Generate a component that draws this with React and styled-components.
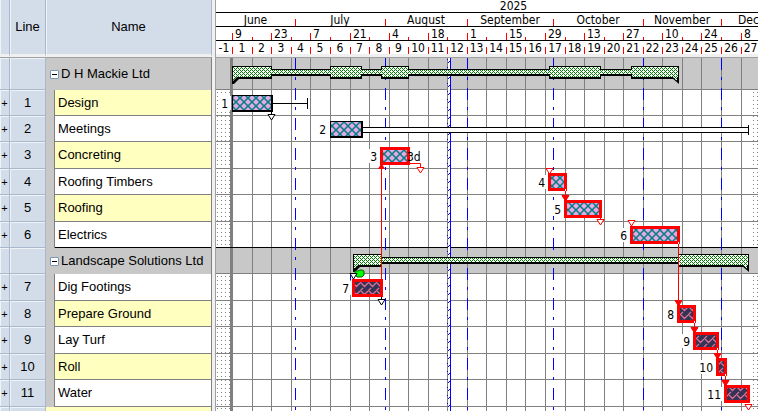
import styled, { createGlobalStyle } from "styled-components";

const GlobalStyle = createGlobalStyle`
  * {
    box-sizing: border-box;
  }

  body {
    margin: 0;
    background-color: #ffffff;
    color: #000000;
    font-family: "Liberation Sans", Arial, sans-serif;
    font-size: 13px;
  }
`;

const Planner = styled.main`
  display: flex;
  height: 100vh;
  overflow: hidden;
`;

const TaskTable = styled.table`
  flex: none;
  align-self: flex-start;
  width: 212px;
  table-layout: fixed;
  border-collapse: separate;
  border-spacing: 0;
`;

const HeadCell = styled.th`
  height: 57px;
  padding: 0 0 2px;
  background-color: #d3dde9;
  border-right: 1px solid #a9b8ca;
  border-bottom: 3px solid #f0f0f0;
  font-weight: normal;
  text-align: center;
  box-shadow: inset 1px 0 #eef3f8;
`;

const SideCell = styled.td`
  padding: 0;
  background-color: #d3dde9;
  border-right: 1px solid #a9b8ca;
  border-bottom: 1px solid #a9b8ca;
  box-shadow: inset 1px 1px #eef3f8;
  text-align: center;
  line-height: 16px;
`;

const Row = styled.tr`
  height: ${(props) => props.$height}px;

  &:first-child td {
    border-top: 1px solid #a0a0a0;
  }
`;

const NameCell = styled.td`
  padding: 0 0 1px 12px;
  background:
    linear-gradient(to right, #c8c8c8 8px, #808080 8px) no-repeat left top / 9px 100%,
    linear-gradient(
        ${(props) => (props.$last ? "#000000, #000000" : "#808080, #808080")}
      )
      no-repeat left bottom / 100% 1px,
    ${(props) => (props.$shaded ? "#ffffc0" : "#ffffff")};
  border-right: 1px solid #808080;
  line-height: 16px;
  white-space: nowrap;
`;

const GroupCell = styled.td`
  padding: 0 0 0 4px;
  background-color: #c8c8c8;
  border-right: 1px solid #808080;
  line-height: 16px;
  white-space: nowrap;
`;

const EmptyCell = styled.td`
  background-color: #ffffc0;
  border-right: 1px solid #808080;
`;

const GroupTitle = styled.div`
  display: flex;
  align-items: center;
  gap: 2px;
`;

const FoldButton = styled.button`
  display: flex;
  align-items: center;
  justify-content: center;
  width: 9px;
  height: 9px;
  padding: 0;
  background-color: #ffffff;
  border: 1px solid #7898b5;
  border-radius: 1px;

  &::before {
    content: "";
    width: 5px;
    height: 1px;
    background-color: #000000;
  }
`;

const ExpandButton = styled.button`
  display: block;
  width: 100%;
  padding: 0;
  background: none;
  border: none;
  color: #000000;
  font-family: "Liberation Sans", Arial, sans-serif;
  font-size: 11px;
  line-height: 16px;
`;

const Splitter = styled.div`
  flex: none;
  width: 4px;
  background-color: #f0f0f0;
  border-right: 1px solid #a0a0a0;
`;

const ChartPanel = styled.section`
  flex: 1;
  min-width: 0;
  overflow: hidden;
  font-family: "DejaVu Sans Condensed", Tahoma, sans-serif;
  font-size: 12px;
`;

const Timescale = styled.header`
  border-bottom: 3px solid #f0f0f0;
`;

const ScaleRow = styled.div`
  display: flex;
  height: ${(props) => props.$height}px;
  border-bottom: ${(props) => (props.$open ? "none" : "1px solid #000000")};
  line-height: ${(props) => (props.$year ? "13px" : "15px")};
`;

const ScaleCell = styled.div`
  flex: none;
  padding-left: ${(props) => (props.$align === "left" ? "3px" : "0")};
  text-align: ${(props) => props.$align || "center"};
  white-space: nowrap;
  background: linear-gradient(#ff0000, #ff0000) no-repeat left bottom / 1px
    ${(props) => props.$tick || 0}px;
`;

const Chart = styled.svg`
  display: block;
  width: 100%;
  border-top: 1px solid #a0a0a0;
`;

// The calendar runs on five-day weeks, day 0 is Monday 9 June 2025.
const dayX = (day) => Math.floor(16.71 + day * 3.91);
const weekX = (week) => dayX(week * 5);

const YEAR_END = 148;
const WEEKS = Array.from({ length: 30 }, (_, i) => i);

const MONTHS = [
  { name: "June", end: 16 },
  { name: "July", end: 39 },
  { name: "August", end: 60 },
  { name: "September", end: 82 },
  { name: "October", end: 105 },
  { name: "November", end: 125 },
  { name: "December", end: YEAR_END },
];

const ROWS = [
  {
    group: "D H Mackie Ltd",
    height: 32,
    barTop: 8,
    blocks: [
      [0, 10],
      [25, 33],
      [38, 45],
      [81, 94],
      [102, 114],
    ],
  },
  { line: 1, name: "Design", height: 26, start: 0, end: 10 },
  { line: 2, name: "Meetings", height: 26, start: 25, end: 33 },
  { line: 3, name: "Concreting", height: 27, start: 38, end: 45, critical: true },
  { line: 4, name: "Roofing Timbers", height: 26, start: 81, end: 85, critical: true },
  { line: 5, name: "Roofing", height: 27, start: 85, end: 94, critical: true },
  { line: 6, name: "Electrics", height: 26, start: 102, end: 114, critical: true, last: true },
  {
    group: "Landscape Solutions Ltd",
    height: 26,
    barTop: 6,
    blocks: [
      [31, 38],
      [114, 132],
    ],
  },
  { line: 7, name: "Dig Footings", height: 27, start: 31, end: 38, critical: true, dark: true },
  { line: 8, name: "Prepare Ground", height: 26, start: 114, end: 118, critical: true, dark: true },
  { line: 9, name: "Lay Turf", height: 27, start: 118, end: 124, critical: true, dark: true },
  { line: 10, name: "Roll", height: 26, start: 124, end: 126, critical: true, dark: true },
  { line: 11, name: "Water", height: 27, start: 126, end: 132, critical: true, dark: true },
];

const SHADED = [1, 3, 5, 8, 10];

let offset = 0;
const LAYOUT = ROWS.map((row) => {
  const top = offset;
  offset += row.height;
  return { ...row, top, bottom: offset - 1 };
});
const rowOf = (line) => LAYOUT.find((row) => row.line === line);
const CHART_HEIGHT = offset + 400;

const Timeline = () => {
  const monthStart = (i) => (i === 0 ? 0 : dayX(MONTHS[i - 1].end));

  return (
    <Timescale>
      <ScaleRow $height={13} $year>
        <ScaleCell style={{ width: dayX(YEAR_END) }}>2025</ScaleCell>
      </ScaleRow>
      <ScaleRow $height={14}>
        {MONTHS.map((month, i) => (
          <ScaleCell
            key={month.name}
            $tick={i === 0 ? 0 : 7}
            style={{ width: dayX(month.end) - monthStart(i) }}
          >
            {month.name}
          </ScaleCell>
        ))}
      </ScaleRow>
      <ScaleRow $height={14}>
        <ScaleCell style={{ width: weekX(0) }} />
        {WEEKS.map((week) => (
          <ScaleCell
            key={week}
            $align="left"
            $tick={week % 2 === 0 ? 7 : 3}
            style={{ width: weekX(week + 1) - weekX(week) }}
          >
            {week % 2 === 0 && new Date(2025, 5, 9 + week * 7).getDate()}
          </ScaleCell>
        ))}
      </ScaleRow>
      <ScaleRow $height={13} $open>
        <ScaleCell style={{ width: weekX(0) }}>-1</ScaleCell>
        {WEEKS.map((week) => (
          <ScaleCell
            key={week}
            $tick={7}
            style={{ width: weekX(week + 1) - weekX(week) }}
          >
            {week + 1}
          </ScaleCell>
        ))}
      </ScaleRow>
    </Timescale>
  );
};

const GREEN_DOTS = ["1010", "0100", "1010", "0001"];

const Patterns = () => (
  <defs>
    <pattern id="dots" width="4" height="4" patternUnits="userSpaceOnUse">
      <rect x="1" y="2" width="1" height="1" fill="#808080" />
    </pattern>
    <pattern id="green" width="4" height="4" patternUnits="userSpaceOnUse">
      <rect width="4" height="4" fill="#ffffff" />
      {GREEN_DOTS.map((bits, y) =>
        [...bits].map(
          (bit, x) =>
            bit === "1" && (
              <rect key={`${x}-${y}`} x={x} y={y} width="1" height="1" fill="#008000" />
            )
        )
      )}
    </pattern>
    <pattern id="diamonds" width="8" height="8" patternUnits="userSpaceOnUse">
      <rect width="8" height="8" fill="#e6a8e6" />
      <path d="M-1 -1L9 9M9 -1L-1 9" stroke="#008080" strokeWidth="1.5" />
    </pattern>
    <pattern id="weave" width="8" height="8" patternUnits="userSpaceOnUse">
      <rect width="8" height="8" fill="#333355" />
      <path
        d="M0 0L5 5M8 1L4 5M3 6L0 9M3 -2L0 1"
        stroke="#db7093"
        strokeWidth="1.3"
      />
    </pattern>
    <pattern id="today" width="4" height="8" patternUnits="userSpaceOnUse">
      <path d="M0 5L4 1" stroke="#0000ff" />
    </pattern>
  </defs>
);

const Grid = () => (
  <g shapeRendering="crispEdges">
    <rect width={weekX(0) - 2} height={CHART_HEIGHT} fill="url(#dots)" />
    <rect x={dayX(133)} width="100%" height={CHART_HEIGHT} fill="url(#dots)" />
    {LAYOUT.filter((row) => row.group).map((row) => (
      <rect key={row.group} y={row.top} width="100%" height={row.height} fill="#c8c8c8" />
    ))}
    {WEEKS.map((week) => (
      <rect key={week} x={weekX(week)} width="1" height={CHART_HEIGHT} fill="#808080" />
    ))}
    <rect x={weekX(0) - 2} width="3" height={CHART_HEIGHT} fill="#808080" />
    {LAYOUT.map((row) => (
      <rect
        key={row.top}
        y={row.bottom}
        width="100%"
        height="1"
        fill={row.last ? "#000000" : "#808080"}
      />
    ))}
    {MONTHS.map((month) => (
      <path
        key={month.name}
        d={`M${dayX(month.end) + 0.5} 0V${CHART_HEIGHT}`}
        stroke="#0000ff"
        strokeDasharray="12 7 3 8"
      />
    ))}
    <rect x={weekX(11) + 1} width="2" height={CHART_HEIGHT} fill="#ffffff" />
    <rect x={weekX(11)} width="3" height={CHART_HEIGHT} fill="url(#today)" />
    <rect x={weekX(11) + 3} width="1" height={CHART_HEIGHT} fill="#0000ff" />
  </g>
);

const SummaryBar = ({ row }) => {
  const y = row.top + row.barTop;
  const x1 = dayX(row.blocks[0][0]);
  const x2 = dayX(row.blocks[row.blocks.length - 1][1]) + 1;

  return (
    <g>
      <g shapeRendering="crispEdges">
        <rect x={x1} y={y + 3} width={x2 - x1} height="7" fill="#000000" />
        {row.blocks.map(([start, end]) => (
          <rect
            key={start}
            x={dayX(start)}
            y={y}
            width={dayX(end) - dayX(start) + 1}
            height="13"
            fill="#000000"
          />
        ))}
      </g>
      <path d={`M${x1} ${y + 11}V${y + 18}H${x1 + 2}L${x1 + 8} ${y + 12}Z`} fill="#000000" />
      <path d={`M${x2} ${y + 11}V${y + 18}L${x2 - 7} ${y + 12}Z`} fill="#000000" />
      <g fill="url(#green)">
        <rect x={x1 + 1} y={y + 4} width={x2 - x1 - 2} height="4" />
        {row.blocks.map(([start, end]) => (
          <rect
            key={start}
            x={dayX(start) + 1}
            y={y + 1}
            width={dayX(end) - dayX(start) - 1}
            height="10"
          />
        ))}
      </g>
      <path d={`M${x1 + 1} ${y + 11}H${x1 + 5}L${x1 + 1} ${y + 15}Z`} fill="url(#green)" />
      <path d={`M${x2 - 2} ${y + 11}H${x2 - 6}L${x2 - 2} ${y + 15}Z`} fill="url(#green)" />
    </g>
  );
};

const TaskBar = ({ row }) => {
  const x = dayX(row.start);
  const width = dayX(row.end) - x;
  const y = row.bottom - 20;
  const labelWidth = String(row.line).length * 7 + 2;

  return (
    <g shapeRendering="crispEdges">
      <rect x={x - labelWidth - 4} y={y + 1} width={labelWidth + 3} height="14" fill="#ffffff" />
      <text x={x - 4} y={row.bottom - 7} textAnchor="end">
        {row.line}
      </text>
      {row.critical ? (
        <>
          <rect x={x - 1} y={y - 1} width={width + 3} height="18" fill="#ff0000" />
          <rect
            x={x + 2}
            y={y + 2}
            width={width - 3}
            height="12"
            fill={row.dark ? "url(#weave)" : "url(#diamonds)"}
          />
        </>
      ) : (
        <>
          <rect x={x} y={y} width={width + 2} height="17" fill="#000000" />
          <rect x={x + 1} y={y + 1} width={width - 1} height="14" fill="url(#diamonds)" />
        </>
      )}
    </g>
  );
};

// A downward marker whose tip rests at (x, y + 6).
const Marker = ({ x, y, color = "#ff0000", filled }) => (
  <path
    d={`M${x - 3} ${y + 0.5}H${x + 4}L${x + 0.5} ${y + 6}Z`}
    fill={filled ? color : "#ffffff"}
    stroke={color}
  />
);

const Link = ({ from, to }) => {
  const x = dayX(from.end);
  const y = to.bottom - 26;

  return (
    <g>
      <path d={`M${x + 0.5} ${from.bottom - 4}V${y}`} stroke="#ff0000" />
      <rect x={x} y={from.bottom - 5} width="1" height="2" fill="#ffffff" />
      <Marker x={x} y={y} filled />
    </g>
  );
};

const Slack = () => {
  const design = rowOf(1);
  const meetings = rowOf(2);
  const designY = design.bottom - 12;
  const meetingsX = dayX(33) + 2;

  return (
    <g shapeRendering="crispEdges">
      <rect x={dayX(10) + 2} y={designY} width="34" height="1" />
      <rect x={dayX(10) + 36} y={designY - 5} width="1" height="11" />
      <rect x={meetingsX} y={meetings.bottom - 14} width={dayX(132) - meetingsX} height="6" />
      <rect
        x={meetingsX}
        y={meetings.bottom - 13}
        width={dayX(132) - meetingsX}
        height="4"
        fill="#ffffff"
      />
      <rect x={dayX(132)} y={meetings.bottom - 16} width="1" height="10" />
    </g>
  );
};

const Links = () => {
  const concreting = rowOf(3);
  const footings = rowOf(7);
  const joinX = dayX(38);
  const startX = dayX(31);

  return (
    <g fill="none">
      <path d={`M${joinX + 0.5} ${concreting.bottom}V${footings.bottom - 21}`} stroke="#ff0000" />
      <path
        d={`M${joinX - 3} ${concreting.bottom + 1}H${joinX + 4}L${joinX + 0.5} ${concreting.bottom - 5}Z`}
        fill="#ff0000"
      />
      <path
        d={`M${dayX(45) + 2} ${concreting.bottom - 4.5}H${dayX(48) + 0.5}V${concreting.bottom - 1}`}
        stroke="#ff0000"
      />
      <Marker x={dayX(48)} y={concreting.bottom - 1} />
      <text x={dayX(45) - 1} y={concreting.bottom - 7} fill="#000000">
        3d
      </text>

      <path d={`M${dayX(10) + 0.5} ${rowOf(1).bottom - 4}v4`} stroke="#000000" />
      <Marker x={dayX(10)} y={rowOf(1).bottom - 1} color="#000000" />

      <Marker x={dayX(81)} y={rowOf(4).top - 1} />
      <Marker x={dayX(102)} y={rowOf(6).top - 2} />
      <path d={`M${dayX(94) + 0.5} ${rowOf(5).bottom - 4}v3`} stroke="#ff0000" />
      <Marker x={dayX(94)} y={rowOf(5).bottom - 2} />

      <Link from={rowOf(4)} to={rowOf(5)} />
      <Link from={rowOf(6)} to={rowOf(8)} />
      <Link from={rowOf(8)} to={rowOf(9)} />
      <Link from={rowOf(9)} to={rowOf(10)} />
      <Link from={rowOf(10)} to={rowOf(11)} />
      <Marker x={dayX(132)} y={rowOf(11).bottom - 2} />

      <path d={`M${joinX + 0.5} ${footings.bottom - 3}v3`} stroke="#000000" />
      <Marker x={joinX} y={footings.bottom - 1} color="#000000" />

      <path
        d={`M${startX + 2} ${footings.top - 3}h3l2 -1h2l2 1v4l-2 2h-5l-2 -3z`}
        fill="#00ff00"
        stroke="#006000"
      />
      <path d={`M${startX - 2.5} ${footings.top + 1}v5`} stroke="#0000ff" />
      <Marker x={startX} y={footings.top - 1} color="#000000" />
    </g>
  );
};

const App = () => {
  return (
    <Planner>
      <GlobalStyle />
      <TaskTable>
        <colgroup>
          <col style={{ width: 10 }} />
          <col style={{ width: 36 }} />
          <col />
        </colgroup>
        <thead>
          <tr>
            <HeadCell aria-label="Expand" />
            <HeadCell>Line</HeadCell>
            <HeadCell>Name</HeadCell>
          </tr>
        </thead>
        <tbody>
          {ROWS.map((row, i) => (
            <Row key={row.group || row.line} $height={i === 0 ? row.height + 1 : row.height}>
              <SideCell>
                {row.line && (
                  <ExpandButton type="button" aria-label={`Expand ${row.name}`}>
                    +
                  </ExpandButton>
                )}
              </SideCell>
              <SideCell>{row.line}</SideCell>
              {row.group ? (
                <GroupCell>
                  <GroupTitle>
                    <FoldButton type="button" aria-label={`Collapse ${row.group}`} />
                    {row.group}
                  </GroupTitle>
                </GroupCell>
              ) : (
                <NameCell $shaded={SHADED.includes(row.line)} $last={row.last}>
                  {row.name}
                </NameCell>
              )}
            </Row>
          ))}
          <Row $height={26}>
            <SideCell />
            <SideCell />
            <EmptyCell />
          </Row>
        </tbody>
      </TaskTable>
      <Splitter />
      <ChartPanel>
        <Timeline />
        <Chart height={CHART_HEIGHT} role="img" aria-label="Schedule">
          <Patterns />
          <Grid />
          {LAYOUT.map((row) =>
            row.group ? (
              <SummaryBar key={row.group} row={row} />
            ) : (
              <TaskBar key={row.line} row={row} />
            )
          )}
          <Slack />
          <Links />
        </Chart>
      </ChartPanel>
    </Planner>
  );
};

export default App;
